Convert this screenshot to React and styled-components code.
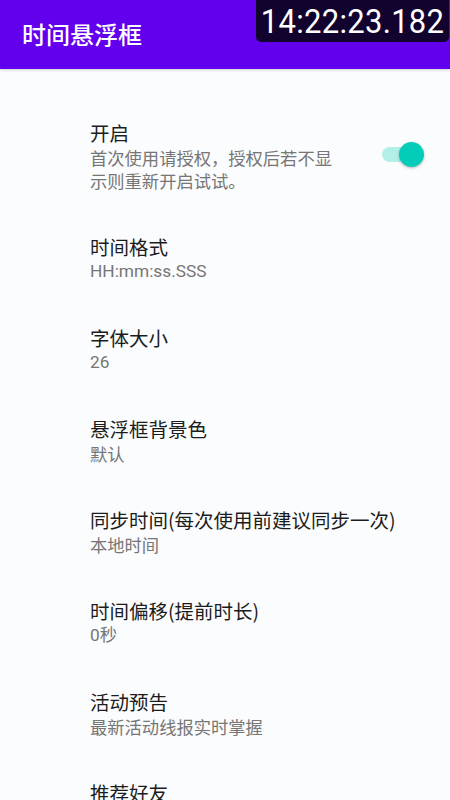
import React from "react";
import styled, { createGlobalStyle } from "styled-components";

const GlobalStyle = createGlobalStyle`
  html, body {
    margin: 0;
    padding: 0;
    background: #fbfcfd;
  }
  body {
    font-family: "Noto Sans CJK SC", Roboto, "Noto Sans", sans-serif;
  }
`;

const Page = styled.div`
  position: relative;
  width: 450px;
  min-height: 800px;
  overflow: hidden;
  background: #fbfcfd;
`;

const AppBar = styled.header`
  display: flex;
  align-items: center;
  height: 69px;
  padding: 0 22px;
  box-sizing: border-box;
  background-color: #6200ee;
  box-shadow: 0 1px 3px rgba(0, 0, 0, 0.18);
`;

const AppTitle = styled.h1`
  margin: 0;
  color: #ffffff;
  font-size: 24px;
  font-weight: 500;
  line-height: 1;
  margin-top: -2px;
`;

const FloatingClock = styled.div`
  position: absolute;
  top: 0;
  left: 256px;
  width: 193px;
  height: 42px;
  display: flex;
  align-items: center;
  justify-content: center;
  border-radius: 0 0 5px 5px;
  background: #12022e;
  color: #ffffff;
  font-family: Roboto, "Liberation Sans", sans-serif;
  font-size: 31px;
  line-height: 1;
  letter-spacing: 0.3px;
`;

const ClockText = styled.span`
  display: inline-block;
  transform: scaleY(1.1);
`;

const List = styled.div`
  display: flex;
  flex-direction: column;
  padding-top: 30px;
`;

const Row = styled.div`
  display: flex;
  align-items: center;
  justify-content: space-between;
  padding: 21px 22px 21px 90px;
`;

const TextBlock = styled.div`
  display: flex;
  flex-direction: column;
  max-width: ${(p) => (p.$narrow ? "252px" : "none")};
`;

const Title = styled.div`
  color: #1c1c1c;
  font-size: 19.5px;
  line-height: 26px;
  white-space: nowrap;
`;

const Summary = styled.div`
  color: #767676;
  font-size: 17.3px;
  line-height: 23px;
  font-family: ${(p) =>
    p.$latin
      ? 'Roboto, "Noto Sans CJK SC", sans-serif'
      : '"Noto Sans CJK SC", Roboto, sans-serif'};
`;

const SwitchTrack = styled.div`
  position: relative;
  width: 34px;
  height: 15px;
  border-radius: 8px;
  background: #b3efe7;
  margin-right: 12px;
  margin-top: -4px;
`;

const SwitchThumb = styled.div`
  position: absolute;
  top: -5px;
  right: -8px;
  width: 25px;
  height: 25px;
  border-radius: 50%;
  background: #03cdb8;
  box-shadow: 0 1px 3px rgba(0, 0, 0, 0.28);
`;

const items = [
  { title: "时间格式", summary: "HH:mm:ss.SSS", latin: true },
  { title: "字体大小", summary: "26", latin: true },
  { title: "悬浮框背景色", summary: "默认" },
  { title: "同步时间(每次使用前建议同步一次)", summary: "本地时间" },
  { title: "时间偏移(提前时长)", summary: "0秒", latin: true },
  { title: "活动预告", summary: "最新活动线报实时掌握" },
  { title: "推荐好友", summary: "" },
];

export default function App() {
  return (
    <Page>
      <GlobalStyle />
      <AppBar>
        <AppTitle>时间悬浮框</AppTitle>
      </AppBar>
      <FloatingClock>
        <ClockText>14:22:23.182</ClockText>
      </FloatingClock>
      <List>
        <Row>
          <TextBlock $narrow>
            <Title>开启</Title>
            <Summary>首次使用请授权，授权后若不显示则重新开启试试。</Summary>
          </TextBlock>
          <SwitchTrack>
            <SwitchThumb />
          </SwitchTrack>
        </Row>
        {items.map((it) => (
          <Row key={it.title}>
            <TextBlock>
              <Title>{it.title}</Title>
              {it.summary && <Summary $latin={it.latin}>{it.summary}</Summary>}
            </TextBlock>
          </Row>
        ))}
      </List>
    </Page>
  );
}
